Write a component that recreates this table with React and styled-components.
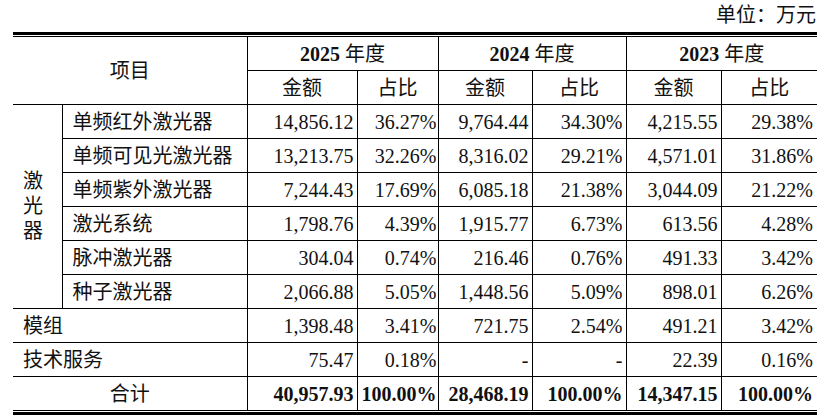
import styled, { createGlobalStyle } from 'styled-components';

const GlobalStyle = createGlobalStyle`
  html, body {
    margin: 0;
    padding: 0;
    background: #fff;
  }
  body {
    font-family: 'Liberation Serif', 'Noto Sans CJK SC', serif;
    color: #111;
  }
`;

const Page = styled.div`
  width: 827px;
  padding: 0 10px 0 13px;
  box-sizing: border-box;
`;

const Unit = styled.div`
  text-align: right;
  font-size: 20px;
  line-height: 30px;
  height: 32px;
  padding-right: 1px;
`;

const Frame = styled.div`
  border-top: 3px solid #000;
  border-bottom: 3px solid #000;
  padding: 1px 0;
`;

const Table = styled.table`
  width: 804px;
  border-collapse: collapse;
  table-layout: fixed;
  font-size: 20px;
  border-top: 1px solid #000;
  border-bottom: 1px solid #000;
`;

const Cell = styled.td`
  height: 33px;
  padding: 0 ${({ $pad }) => $pad ?? 3}px 0 ${({ $padLeft }) => $padLeft ?? 3}px;
  border: 1px solid #000;
  text-align: ${({ $align }) => $align || 'right'};
  font-weight: ${({ $bold }) => ($bold ? 700 : 400)};
  line-height: 24px;
  vertical-align: middle;
  white-space: nowrap;
  overflow: hidden;

  &:first-child {
    border-left: none;
  }
  &:last-child {
    border-right: none;
  }
`;

const Year = styled.span`
  font-weight: 700;
`;

const Cjk = styled.span`
  font-weight: 400;
`;

const VerticalLabel = styled.span`
  display: block;
  width: 20px;
  line-height: 25px;
  white-space: normal;
  word-break: break-all;
`;

const years = ['2025', '2024', '2023'];

const lasers = [
  ['单频红外激光器', '14,856.12', '36.27%', '9,764.44', '34.30%', '4,215.55', '29.38%'],
  ['单频可见光激光器', '13,213.75', '32.26%', '8,316.02', '29.21%', '4,571.01', '31.86%'],
  ['单频紫外激光器', '7,244.43', '17.69%', '6,085.18', '21.38%', '3,044.09', '21.22%'],
  ['激光系统', '1,798.76', '4.39%', '1,915.77', '6.73%', '613.56', '4.28%'],
  ['脉冲激光器', '304.04', '0.74%', '216.46', '0.76%', '491.33', '3.42%'],
  ['种子激光器', '2,066.88', '5.05%', '1,448.56', '5.09%', '898.01', '6.26%'],
];

const others = [
  ['模组', '1,398.48', '3.41%', '721.75', '2.54%', '491.21', '3.42%'],
  ['技术服务', '75.47', '0.18%', '-', '-', '22.39', '0.16%'],
];

const total = ['合计', '40,957.93', '100.00%', '28,468.19', '100.00%', '14,347.15', '100.00%'];

const widths = [49, 185, 110, 81, 94, 94, 95, 96];

function Values({ row, bold }) {
  return row.map((v, i) => (
    <Cell key={i} $bold={bold} $pad={i === 1 ? 1 : i === 5 ? 4 : 3}>
      {v}
    </Cell>
  ));
}

export default function App() {
  return (
    <>
      <GlobalStyle />
      <Page>
        <Unit>单位：万元</Unit>
        <Frame>
          <Table>
            <colgroup>
              {widths.map((w, i) => (
                <col key={i} style={{ width: w }} />
              ))}
            </colgroup>
            <thead>
              <tr>
                <Cell as="th" rowSpan={2} colSpan={2} $align="center" $bold>
                  <Cjk>项目</Cjk>
                </Cell>
                {years.map((y) => (
                  <Cell as="th" key={y} colSpan={2} $align="center">
                    <Year>{y}</Year> <Cjk>年度</Cjk>
                  </Cell>
                ))}
              </tr>
              <tr>
                {years.map((y) => [
                  <Cell as="th" key={y + 'a'} $align="center">
                    <Cjk>金额</Cjk>
                  </Cell>,
                  <Cell as="th" key={y + 'b'} $align="center">
                    <Cjk>占比</Cjk>
                  </Cell>,
                ])}
              </tr>
            </thead>
            <tbody>
              {lasers.map(([name, ...vals], i) => (
                <tr key={name}>
                  {i === 0 && (
                    <Cell rowSpan={lasers.length} $align="left" $padLeft={10}>
                      <VerticalLabel>激光器</VerticalLabel>
                    </Cell>
                  )}
                  <Cell $align="left" $padLeft={10}>{name}</Cell>
                  <Values row={vals} />
                </tr>
              ))}
              {others.map(([name, ...vals]) => (
                <tr key={name}>
                  <Cell colSpan={2} $align="left" $padLeft={10}>{name}</Cell>
                  <Values row={vals} />
                </tr>
              ))}
              <tr>
                <Cell colSpan={2} $align="center">{total[0]}</Cell>
                <Values row={total.slice(1)} bold />
              </tr>
            </tbody>
          </Table>
        </Frame>
      </Page>
    </>
  );
}
